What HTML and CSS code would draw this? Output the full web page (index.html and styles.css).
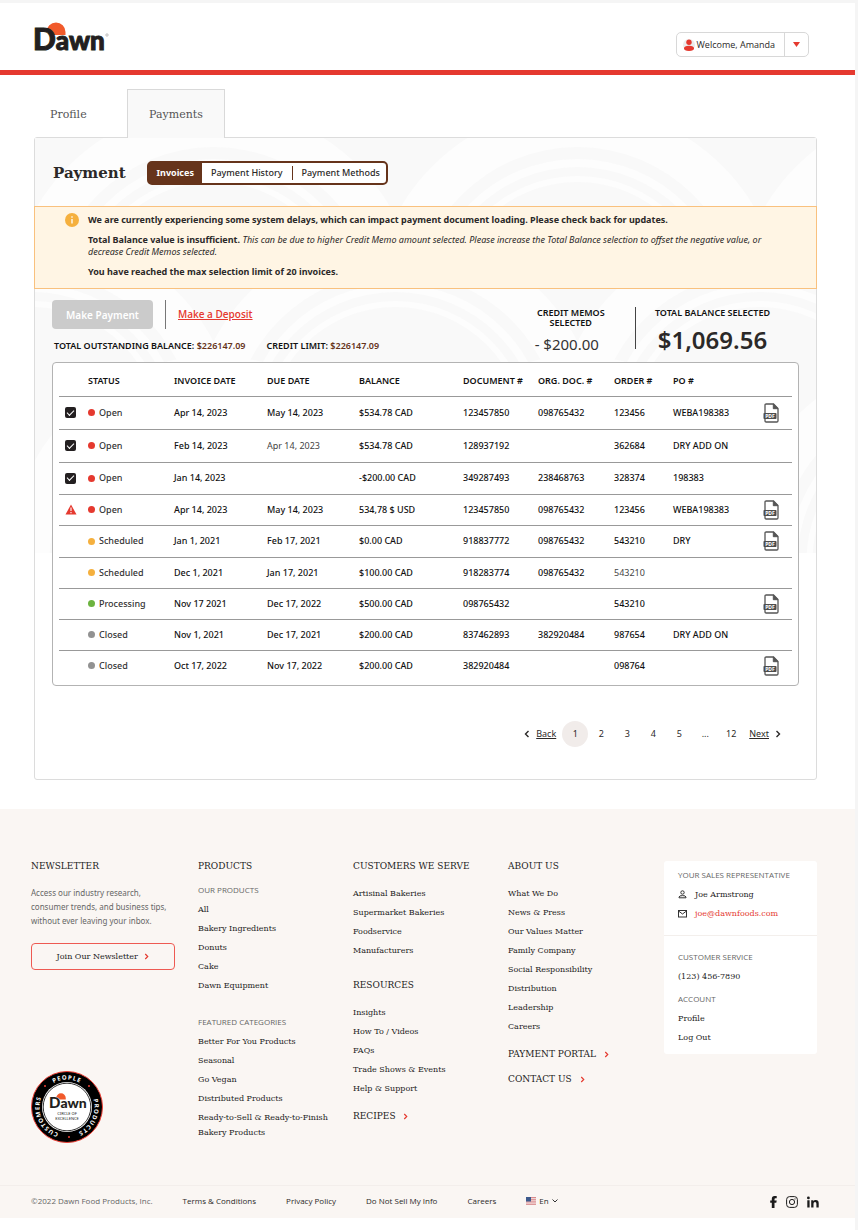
FILE: index.html
```html
<!DOCTYPE html>
<html lang="en">
<head>
<meta charset="utf-8">
<meta name="viewport" content="width=device-width, initial-scale=1">
<title>Dawn – Payments</title>
<link rel="stylesheet" href="styles.css">
</head>
<body>
<svg class="defs" aria-hidden="true">
  <symbol id="sheet" viewBox="0 0 16 20">
    <path d="M2 10V2.200Q2 1 3.200 1H10.500L15 5.500V17.800Q15 19 13.800 19H3.200Q2 19 2 17.800V15" fill="#fff" stroke="#555" stroke-width="1.300"/>
    <path d="M10.300 1V5.700H15z" fill="#555" stroke="#555"/>
    <rect x="0.500" y="10" width="13" height="6" rx="0.800" fill="#4d4d4d"/>
  </symbol>
  <symbol id="chev" viewBox="0 0 6 8"><path d="M1.500 1L4.500 4L1.500 7" fill="none" stroke="currentColor" stroke-width="1.400"/></symbol>
  <symbol id="sun" viewBox="0 0 20 14"><path d="M0.500 10A9.500 9.500 0 0 1 19.500 10V13H8Q6 9 0.500 8z" fill="#f15a2b"/></symbol>
</svg>
<div class="page">
  <header class="topbar">
    <a href="#" aria-label="Dawn home"><svg class="logo" viewBox="0 0 76 31">
      <use href="#sun" x="13" y="1" width="20" height="14"/>
      <text x="0" y="29" class="logo-d">D<tspan class="logo-awn">awn</tspan></text>
      <circle cx="74" cy="14" r="1.200" fill="none" stroke="#999" stroke-width="0.600"/>
    </svg></a>
    <div class="account">
      <button class="account-name" type="button">
        <svg width="12" height="12" viewBox="0 0 12 12" aria-hidden="true"><circle cx="6" cy="6" r="6" fill="#ececec"/><circle cx="6" cy="3.300" r="2.700" fill="#e5392f"/><ellipse cx="6" cy="9.300" rx="5" ry="2.600" fill="#e5392f"/></svg>
        Welcome, Amanda
      </button>
      <button class="account-more" type="button" aria-label="Account menu"><svg width="7" height="5" viewBox="0 0 7 5"><path d="M0 0H7L3.500 5z" fill="#e5392f"/></svg></button>
    </div>
  </header>

  <main class="main">
    <nav class="tabs">
      <a class="tab" href="#">Profile</a>
      <a class="tab tab-active" href="#">Payments</a>
    </nav>
    <section class="panel">
      <svg class="pattern" viewBox="34 138 782 415" preserveAspectRatio="xMidYMin slice" aria-hidden="true">
        <defs>
          <g id="fan">
            <circle r="205" fill="#fdfdfd"/><circle r="164" fill="#f9f9f9"/>
            <circle r="152" fill="#fdfdfd"/><circle r="144" fill="#f9f9f9"/>
            <circle r="135" fill="#fdfdfd"/><circle r="129" fill="#f9f9f9"/>
          </g>
        </defs>
        <rect x="34" y="138" width="782" height="415" fill="#f9f9f9"/>
        <use href="#fan" x="31" y="186"/><use href="#fan" x="395" y="186"/><use href="#fan" x="759" y="186"/>
        <use href="#fan" x="213" y="311"/><use href="#fan" x="577" y="311"/><use href="#fan" x="941" y="311"/>
        <use href="#fan" x="31" y="436"/><use href="#fan" x="395" y="436"/><use href="#fan" x="759" y="436"/>
        <use href="#fan" x="213" y="561"/><use href="#fan" x="577" y="561"/><use href="#fan" x="941" y="561"/>
      </svg>

      <div class="panel-head">
        <h1 class="title">Payment</h1>
        <div class="segments">
          <button class="segment segment-active" type="button">Invoices</button>
          <button class="segment" type="button">Payment History</button>
          <button class="segment segment-last" type="button">Payment Methods</button>
        </div>
      </div>

      <div class="alert">
        <svg class="alert-icon" viewBox="0 0 14 14" aria-hidden="true"><circle cx="7" cy="7" r="7" fill="#f5b03e"/><path d="M7 6V10.500M7 3.300V4.700" stroke="#fff" stroke-width="1.300"/></svg>
        <div class="alert-body">
          <p><strong>We are currently experiencing some system delays, which can impact payment document loading. Please check back for updates.</strong></p>
          <p><strong>Total Balance value is insufficient.</strong> <em>This can be due to higher Credit Memo amount selected. Please increase the Total Balance selection to offset the negative value, or decrease Credit Memos selected.</em></p>
          <p><strong>You have reached the max selection limit of 20 invoices.</strong></p>
        </div>
      </div>

      <div class="summary">
        <div class="summary-left">
          <div class="actions">
            <button class="pay" type="button" disabled>Make Payment</button>
            <a class="deposit" href="#">Make a Deposit</a>
          </div>
          <div class="limits">
            <span>TOTAL OUTSTANDING BALANCE: <b>$226147.09</b></span>
            <span>CREDIT LIMIT: <b>$226147.09</b></span>
          </div>
        </div>
        <div class="stat stat-memos">
          <span class="stat-label">CREDIT MEMOS<br>SELECTED</span>
          <span class="stat-memo">- $200.00</span>
        </div>
        <div class="stat stat-total">
          <span class="stat-label">TOTAL BALANCE SELECTED</span>
          <span class="stat-value">$1,069.56</span>
        </div>
      </div>

      <div class="table-box">
        <table class="invoices">
          <colgroup><col class="c-pick"><col class="c-status"><col class="c-inv"><col class="c-due"><col class="c-bal"><col class="c-doc"><col class="c-org"><col class="c-order"><col><col class="c-pdf"></colgroup>
          <thead><tr><th></th><th>STATUS</th><th>INVOICE DATE</th><th>DUE DATE</th><th>BALANCE</th><th>DOCUMENT #</th><th>ORG. DOC. #</th><th>ORDER #</th><th>PO #</th><th></th></tr></thead>
          <tbody>
            <tr class="tall"><td><input class="check" type="checkbox" checked aria-label="Select invoice 123457850"></td><td><span class="status open">Open</span></td><td>Apr 14, 2023</td><td>May 14, 2023</td><td>$534.78 CAD</td><td>123457850</td><td>098765432</td><td>123456</td><td>WEBA198383</td><td><a href="#"><svg class="pdf" viewBox="0 0 16 20"><use href="#sheet"/><text x="7" y="15" text-anchor="middle">PDF</text></svg></a></td></tr>
            <tr class="tall"><td><input class="check" type="checkbox" checked aria-label="Select invoice 128937192"></td><td><span class="status open">Open</span></td><td>Feb 14, 2023</td><td class="soft">Apr 14, 2023</td><td>$534.78 CAD</td><td>128937192</td><td></td><td>362684</td><td>DRY ADD ON</td><td></td></tr>
            <tr class="mid"><td><input class="check" type="checkbox" checked aria-label="Select invoice 349287493"></td><td><span class="status open">Open</span></td><td>Jan 14, 2023</td><td></td><td>-$200.00 CAD</td><td>349287493</td><td>238468763</td><td>328374</td><td>198383</td><td></td></tr>
            <tr><td><svg class="warn" viewBox="0 0 12 11" role="img" aria-label="Warning"><path d="M6 0.500L11.500 10.500H0.500z" fill="#e5392f"/><path d="M6 3.500V7M6 8V9.200" stroke="#fff" stroke-width="1.100"/></svg></td><td><span class="status open">Open</span></td><td>Apr 14, 2023</td><td>May 14, 2023</td><td>534,78 $ USD</td><td>123457850</td><td>098765432</td><td>123456</td><td>WEBA198383</td><td><a href="#"><svg class="pdf" viewBox="0 0 16 20"><use href="#sheet"/><text x="7" y="15" text-anchor="middle">PDF</text></svg></a></td></tr>
            <tr class="mid"><td></td><td><span class="status scheduled">Scheduled</span></td><td>Jan 1, 2021</td><td>Feb 17, 2021</td><td>$0.00 CAD</td><td>918837772</td><td>098765432</td><td>543210</td><td>DRY</td><td><a href="#"><svg class="pdf" viewBox="0 0 16 20"><use href="#sheet"/><text x="7" y="15" text-anchor="middle">PDF</text></svg></a></td></tr>
            <tr><td></td><td><span class="status scheduled">Scheduled</span></td><td>Dec 1, 2021</td><td>Jan 17, 2021</td><td>$100.00 CAD</td><td>918283774</td><td>098765432</td><td class="soft">543210</td><td></td><td></td></tr>
            <tr><td></td><td><span class="status processing">Processing</span></td><td>Nov 17 2021</td><td>Dec 17, 2022</td><td>$500.00 CAD</td><td>098765432</td><td></td><td>543210</td><td></td><td><a href="#"><svg class="pdf" viewBox="0 0 16 20"><use href="#sheet"/><text x="7" y="15" text-anchor="middle">PDF</text></svg></a></td></tr>
            <tr><td></td><td><span class="status closed">Closed</span></td><td>Nov 1, 2021</td><td>Dec 17, 2021</td><td>$200.00 CAD</td><td>837462893</td><td>382920484</td><td>987654</td><td>DRY ADD ON</td><td></td></tr>
            <tr><td></td><td><span class="status closed">Closed</span></td><td>Oct 17, 2022</td><td>Nov 17, 2022</td><td>$200.00 CAD</td><td>382920484</td><td></td><td>098764</td><td></td><td><a href="#"><svg class="pdf" viewBox="0 0 16 20"><use href="#sheet"/><text x="7" y="15" text-anchor="middle">PDF</text></svg></a></td></tr>
          </tbody>
        </table>
      </div>

      <nav class="pager" aria-label="Pages">
        <a class="pager-step" href="#"><svg class="chev flip"><use href="#chev"/></svg><u>Back</u></a>
        <a class="page-no page-current" href="#">1</a><a class="page-no" href="#">2</a><a class="page-no" href="#">3</a><a class="page-no" href="#">4</a><a class="page-no" href="#">5</a><span class="page-no">...</span><a class="page-no" href="#">12</a>
        <a class="pager-step" href="#"><u>Next</u><svg class="chev"><use href="#chev"/></svg></a>
      </nav>
    </section>
  </main>

  <footer class="footer">
    <div class="footer-grid">
      <div>
        <h2 class="foot-title">NEWSLETTER</h2>
        <p class="foot-text">Access our industry research,<br>consumer trends, and business tips,<br>without ever leaving your inbox.</p>
        <button class="join" type="button">Join Our Newsletter <svg class="chev red"><use href="#chev"/></svg></button>
        <svg class="badge" viewBox="0 0 72 72" role="img" aria-label="Dawn Circle of Excellence">
          <circle cx="36" cy="36" r="35.500" fill="#000" stroke="#ee4036"/>
          <circle cx="36" cy="36" r="25" fill="#fff"/>
          <circle cx="36" cy="36" r="23.800" fill="none" stroke="#000" stroke-width="0.800"/>
          <path id="ring" d="M36 63.500A27.500 27.500 0 0 1 36 8.500A27.500 27.500 0 0 1 36 63.500" fill="none"/>
          <path id="ring2" d="M36 8.500A27.500 27.500 0 0 1 36 63.500A27.500 27.500 0 0 1 36 8.500" fill="none"/>
          <text class="ring-text" text-anchor="middle"><textPath href="#ring" startOffset="50%">PEOPLE</textPath></text>
          <text class="ring-text" text-anchor="middle"><textPath href="#ring2" startOffset="32%">PRODUCTS</textPath></text>
          <text class="ring-text" text-anchor="middle"><textPath href="#ring" startOffset="18%">CUSTOMERS</textPath></text>
          <circle cx="14" cy="15" r="1" fill="#ee4036"/><circle cx="58" cy="15" r="1" fill="#ee4036"/><circle cx="38" cy="66" r="1" fill="#ee4036"/>
          <use href="#sun" x="25" y="22" width="10" height="7"/>
          <text x="18" y="37" class="badge-logo">D<tspan class="badge-awn">awn</tspan></text>
          <text x="36" y="44" class="badge-text" text-anchor="middle">CIRCLE OF</text>
          <text x="36" y="49" class="badge-text" text-anchor="middle">EXCELLENCE</text>
        </svg>
      </div>
      <div>
        <h2 class="foot-title">PRODUCTS</h2>
        <h3 class="foot-sub first">OUR PRODUCTS</h3>
        <ul class="links near"><li><a href="#">All</a></li><li><a href="#">Bakery Ingredients</a></li><li><a href="#">Donuts</a></li><li><a href="#">Cake</a></li><li><a href="#">Dawn Equipment</a></li></ul>
        <h3 class="foot-sub next">FEATURED CATEGORIES</h3>
        <ul class="links near"><li><a href="#">Better For You Products</a></li><li><a href="#">Seasonal</a></li><li><a href="#">Go Vegan</a></li><li><a href="#">Distributed Products</a></li><li><a href="#">Ready-to-Sell &amp; Ready-to-Finish<br>Bakery Products</a></li></ul>
      </div>
      <div>
        <h2 class="foot-title">CUSTOMERS WE SERVE</h2>
        <ul class="links"><li><a href="#">Artisinal Bakeries</a></li><li><a href="#">Supermarket Bakeries</a></li><li><a href="#">Foodservice</a></li><li><a href="#">Manufacturers</a></li></ul>
        <h2 class="foot-title spaced">RESOURCES</h2>
        <ul class="links"><li><a href="#">Insights</a></li><li><a href="#">How To / Videos</a></li><li><a href="#">FAQs</a></li><li><a href="#">Trade Shows &amp; Events</a></li><li><a href="#">Help &amp; Support</a></li></ul>
        <h2 class="foot-title more"><a href="#">RECIPES <svg class="chev red"><use href="#chev"/></svg></a></h2>
      </div>
      <div>
        <h2 class="foot-title">ABOUT US</h2>
        <ul class="links"><li><a href="#">What We Do</a></li><li><a href="#">News &amp; Press</a></li><li><a href="#">Our Values Matter</a></li><li><a href="#">Family Company</a></li><li><a href="#">Social Responsibility</a></li><li><a href="#">Distribution</a></li><li><a href="#">Leadership</a></li><li><a href="#">Careers</a></li></ul>
        <h2 class="foot-title more"><a href="#">PAYMENT PORTAL <svg class="chev red"><use href="#chev"/></svg></a></h2>
        <h2 class="foot-title more"><a href="#">CONTACT US <svg class="chev red"><use href="#chev"/></svg></a></h2>
      </div>
      <aside class="card">
        <div class="card-part">
          <h3 class="foot-sub">YOUR SALES REPRESENTATIVE</h3>
          <ul class="links near">
            <li class="contact"><svg width="9" height="9" viewBox="0 0 9 9" fill="none" stroke="#333" aria-hidden="true"><circle cx="4.500" cy="2.500" r="1.700"/><path d="M1 7.800V7Q1.200 5.600 4.500 5.600T8 7V7.800z"/></svg>Joe Armstrong</li>
            <li class="contact"><svg width="9" height="9" viewBox="0 0 9 9" fill="none" stroke="#333" aria-hidden="true"><rect x="0.500" y="1.500" width="8" height="6.500"/><path d="M0.500 2L4.500 5L8.500 2"/></svg><a class="mail" href="mailto:joe@dawnfoods.com">joe@dawnfoods.com</a></li>
          </ul>
        </div>
        <div class="card-part card-low">
          <h3 class="foot-sub">CUSTOMER SERVICE</h3>
          <ul class="links near"><li><a href="tel:1234567890">(123) 456-7890</a></li></ul>
          <h3 class="foot-sub gap">ACCOUNT</h3>
          <ul class="links near"><li><a href="#">Profile</a></li><li><a href="#">Log Out</a></li></ul>
        </div>
      </aside>
    </div>
    <div class="legal">
      <span class="copy">©2022 Dawn Food Products, Inc.</span>
      <a href="#">Terms &amp; Conditions</a>
      <a href="#">Privacy Policy</a>
      <a href="#">Do Not Sell My Info</a>
      <a href="#">Careers</a>
      <label class="lang">
        <svg width="10" height="8" viewBox="0 0 10 8" role="img" aria-label="Language"><rect width="10" height="8" fill="#f0d4d4"/><path d="M0 .5H10M0 2.700H10M0 4.900H10M0 7.300H10" stroke="#d98a8c" stroke-width="1"/><rect width="5" height="4.500" fill="#3d5a8c"/></svg>
        <select class="lang-select"><option>En</option></select>
        <svg width="6" height="4" viewBox="0 0 6 4" aria-hidden="true"><path d="M0.500 0.500L3 3L5.500 0.500" fill="none" stroke="#333"/></svg>
      </label>
      <div class="social">
        <a href="#" aria-label="Facebook"><svg width="7" height="12" viewBox="0 0 7 12"><path d="M1.800 12V6.700H0.200V4.400H1.800V3Q1.800 0.100 4.500 0.100H6.700V2.300H5.400Q4.500 2.300 4.500 3.200V4.400H6.700L6.300 6.700H4.500V12z" fill="#1b1b1b"/></svg></a>
        <a href="#" aria-label="Instagram"><svg width="12" height="12" viewBox="0 0 12 12" fill="none" stroke="#1b1b1b"><rect x="0.600" y="0.600" width="10.800" height="10.800" rx="3"/><circle cx="6" cy="6" r="2.600"/><circle cx="9" cy="3" r="0.200"/></svg></a>
        <a href="#" aria-label="LinkedIn"><svg width="12" height="12" viewBox="0 0 12 12" fill="#1b1b1b"><circle cx="1.400" cy="1.900" r="1.400"/><path d="M0.300 4.200H2.600V11.500H0.300zM4.200 4.200H6.400V5.200Q7 4 8.700 4Q11.700 4 11.700 7.300V11.500H9.400V7.800Q9.400 5.900 8 5.900Q6.500 5.900 6.500 7.800V11.500H4.200z"/></svg></a>
      </div>
    </div>
  </footer>
</div>
</body>
</html>
```

FILE: styles.css
```css
* { box-sizing: border-box; }
body {
  margin: 0;
  padding: 3px 3px 0 0;
  background: #f5f5f5;
  color: #2b2928;
  font-family: "Noto Sans", "Open Sans", sans-serif;
  font-size: 9px;
  line-height: 12px;
}
h1, h2, h3, p, ul { margin: 0; padding: 0; font-weight: 400; }
ul { list-style: none; }
a { color: inherit; text-decoration: none; }
svg { display: block; flex: none; }
button { font: inherit; color: inherit; background: none; border: 0; padding: 0; }
.defs { position: absolute; width: 0; height: 0; }
.page { background: #fff; padding-bottom: 12px; }

/* header */
.topbar {
  display: flex;
  justify-content: space-between;
  align-items: flex-start;
  padding: 18px 46px 0 33px;
  height: 72px;
  border-bottom: 5px solid #e5392f;
}
.logo { width: 76px; height: 31px; overflow: visible; }
.logo-d, .badge-logo {
  font-family: Lato, "Open Sans", sans-serif;
  font-weight: 900;
  fill: #231f20;
  stroke: #231f20;
  stroke-width: 1px;
}
.logo-d { font-size: 30px; }
.logo-awn { font-size: 26px; }
.account {
  display: flex;
  height: 25px;
  margin-top: 11px;
  border: 1px solid #d8d8d8;
  border-radius: 5px;
  font-family: "Open Sans", sans-serif;
}
.account-name { display: flex; align-items: center; gap: 2px; padding: 0 9px 0 6px; }
.account-more { display: flex; align-items: center; padding: 0 8px; border-left: 1px solid #d8d8d8; }

/* tabs and panel */
.main { padding: 14px 38px 29px 34px; }
.tabs {
  display: flex;
  font: 11px/16px "DejaVu Serif", serif;
  color: #555;
}
.tab { padding: 18px 21px 14px 16px; min-width: 93px; }
.tab-active {
  position: relative;
  z-index: 1;
  margin-bottom: -1px;
  padding: 17px 21px 15px;
  min-width: 98px;
  text-align: center;
  background: #f9f9f9;
  border: 1px solid #d9d9d9;
  border-bottom: 0;
}
.panel {
  position: relative;
  border: 1px solid #dcdcdc;
  border-radius: 3px;
  padding-bottom: 32px;
}
.pattern { position: absolute; left: 0; top: 0; width: 100%; height: 415px; }
.panel-head, .alert, .summary, .table-box, .pager { position: relative; }
.panel-head { display: flex; align-items: center; gap: 21px; padding: 23px 18px 21px; }
.title { font: 700 15px/24px "DejaVu Serif", serif; }
.segments { display: flex; height: 24px; border: 2px solid #66341b; border-radius: 5px; background: #fff; }
.segment { padding: 0 10px 0 9px; font-weight: 500; line-height: 18px; }
.segment-active { background: #66341b; color: #fff; font-weight: 700; padding: 0 8px; }
.segment-last { position: relative; padding: 0 6px 0 9px; }
.segment-last::before { content: ""; position: absolute; left: 0; top: 3px; bottom: 3px; width: 1px; background: #66341b; }

.alert {
  display: flex;
  gap: 9px;
  margin: 0 -1px;
  padding: 6px 38px 10px 30px;
  background: #fff5e4;
  border: 1px solid #f9c17e;
}
.alert-icon { width: 14px; height: 14px; }
.alert-body { display: grid; gap: 8px; padding-top: 1px; }
.alert strong { font-weight: 700; }

.summary { display: flex; padding: 11px 46px 0 17px; height: 73px; }
.summary-left { flex: 1; }
.actions { display: flex; gap: 12px; height: 29px; }
.pay { width: 101px; background: #cbcbcb; border-radius: 4px; color: #fff; font-size: 10px; font-weight: 600; }
.deposit {
  padding: 8px 0 0 12px;
  border-left: 1px solid #777;
  color: #e5392f;
  font-family: "Open Sans", sans-serif;
  font-size: 10px;
  font-weight: 600;
  text-decoration: underline;
}
.limits { display: flex; gap: 21px; margin: 11px 0 0 2px; color: #111; font-size: 9px; font-weight: 600; }
.limits b { color: #66341b; font-weight: 600; }
.stat { display: flex; flex-direction: column; align-items: center; margin-top: 7px; height: 42px; color: #111; }
.stat-label { padding-top: 1px; font-size: 9px; line-height: 10px; font-weight: 600; text-align: center; }
.stat-memos { padding-right: 28px; border-right: 1px solid #444; }
.stat-total { padding-left: 19px; gap: 8px; }
.stat-memo { padding: 6px 8px 0 0; font-size: 15px; line-height: 20px; color: #333; }
.stat-value { font-size: 24px; line-height: 28px; font-weight: 600; color: #2b2928; }

/* invoices */
.table-box {
  margin: 0 17px;
  padding: 0 6px;
  background: #fff;
  border: 1px solid #b3b3b3;
  border-radius: 4px;
}
.invoices { width: 100%; table-layout: fixed; border-collapse: collapse; color: #111; font-weight: 500; }
.invoices th { height: 33px; padding: 3px 0 0; text-align: left; font-weight: 600; white-space: nowrap; }
.invoices td { height: 31px; padding: 0; border-top: 1px solid #999; white-space: nowrap; }
.invoices .tall td { height: 33px; }
.invoices .mid td { height: 32px; }
.invoices .soft { color: #444; font-weight: 400; }
.invoices tbody tr:last-child td { height: 35px; padding-bottom: 4px; }
.c-pick, .c-pdf { width: 29px; }
.c-status { width: 86px; }
.c-inv { width: 93px; }
.c-due { width: 92px; }
.c-bal { width: 104px; }
.c-doc { width: 75px; }
.c-org { width: 76px; }
.c-order { width: 59px; }
.check {
  appearance: none;
  display: grid;
  place-items: center;
  width: 11px;
  height: 11px;
  margin: 0 0 0 6px;
  border-radius: 2px;
  background: #231f20;
}
.check::after {
  content: "";
  width: 6px;
  height: 3px;
  margin-bottom: 2px;
  border: solid #fff;
  border-width: 0 0 1px 1px;
  transform: rotate(-45deg);
}
.warn { width: 12px; height: 11px; margin-left: 6px; }
.status { display: flex; align-items: center; gap: 4px; color: #333; }
.status::before { content: ""; width: 7px; height: 7px; border-radius: 50%; background: currentColor; }
.open::before { background: #e5392f; }
.scheduled::before { background: #f5b03e; }
.processing::before { background: #6cb33f; }
.closed::before { background: #929292; }
.pdf { width: 16px; height: 20px; font: 700 5px "Noto Sans", sans-serif; fill: #fff; }

.pager { display: flex; align-items: center; justify-content: flex-end; padding: 35px 29px 0 0; }
.pager-step { display: flex; align-items: center; gap: 6px; padding: 0 6px 0 5px; }
.page-no { width: 26px; line-height: 26px; text-align: center; }
.page-current { border-radius: 50%; background: #f1ecea; }
.chev { display: inline-block; width: 6px; height: 8px; }
.flip { transform: scaleX(-1); }
.red { width: 5px; height: 7px; color: #e5392f; }

/* footer */
.footer { background: #faf6f3; }
.footer-grid {
  display: grid;
  grid-template-columns: 167fr 155fr 155fr 156fr 153fr;
  padding: 50px 38px 42px 31px;
  font: 8px/15px "DejaVu Serif", serif;
  color: #222;
}
.foot-title { font-size: 9px; line-height: 14px; }
.foot-title .red { margin-left: 5px; vertical-align: -1px; }
.spaced { margin-top: 18px; }
.more { margin-top: 11px; }
.foot-text { margin: 13px 0 15px; font: 8px/14px "Noto Sans", sans-serif; color: #666; }
.join { width: 144px; height: 27px; border: 1px solid #ee5a52; border-radius: 4px; font: inherit; }
.join .chev { margin-left: 4px; vertical-align: -1px; }
.badge { width: 72px; height: 72px; margin-top: 101px; }
.badge-logo { font-size: 15px; stroke-width: 0; }
.badge-awn { font-size: 14px; }
.ring-text { font: 700 6px "Noto Sans", sans-serif; letter-spacing: 1px; fill: #fff; }
.badge-text { font: 4px "Noto Sans", sans-serif; fill: #222; }
.foot-sub { font: 8px/14px "Open Sans", sans-serif; color: #666; }
.first { margin-top: 10px; }
.next { margin-top: 20px; }
.links { margin-top: 11px; }
.near { margin-top: 3px; }
.links li { padding: 2px 0; }
.card { align-self: start; margin-top: 2px; background: #fff; border-radius: 3px; }
.card-part { padding: 7px 14px 12px; }
.card-low { padding: 14px 14px 7px; border-top: 1px solid #f3efec; }
.gap { margin-top: 6px; }
.links .contact { display: flex; align-items: center; gap: 8px; }
.mail { color: #e5392f; }

.legal {
  display: flex;
  align-items: center;
  gap: 30px;
  height: 33px;
  padding: 0 36px 3px 31px;
  border-top: 1px solid #f3eeeb;
  font-family: "Open Sans", sans-serif;
  font-size: 8px;
}
.copy { color: #666; }
.lang { display: flex; align-items: center; gap: 3px; }
.lang-select { appearance: none; border: 0; padding: 0; margin: 0; background: none; font: inherit; color: inherit; }
.social { display: flex; gap: 9px; margin: 3px 0 0 auto; }
```
